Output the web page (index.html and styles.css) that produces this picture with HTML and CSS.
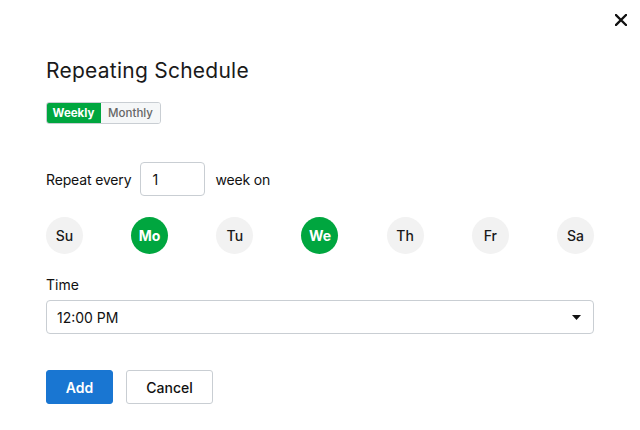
FILE: index.html
```html
<!DOCTYPE html>
<html>
<head>
<meta charset="utf-8">
<link rel="stylesheet" href="styles.css">
</head>
<body>
<div class="dialog">
  <button class="close" aria-label="Close">
    <svg width="12" height="12" viewBox="0 0 12 12"><path d="M1 1L11 11M11 1L1 11" stroke="#111" stroke-width="2.3" stroke-linecap="square"/></svg>
  </button>
  <h1 class="title">Repeating Schedule</h1>
  <div class="toggle">
    <span class="seg seg-on">Weekly</span>
    <span class="seg seg-off">Monthly</span>
  </div>
  <div class="repeat">
    <span>Repeat every</span>
    <div class="num">1</div>
    <span>week on</span>
  </div>
  <div class="days">
    <span class="day">Su</span>
    <span class="day on">Mo</span>
    <span class="day">Tu</span>
    <span class="day on">We</span>
    <span class="day">Th</span>
    <span class="day">Fr</span>
    <span class="day">Sa</span>
  </div>
  <div class="label">Time</div>
  <div class="select">
    <span>12:00 PM</span>
    <svg width="9" height="5" viewBox="0 0 9 5"><path d="M0 0H9L4.5 5Z" fill="#111"/></svg>
  </div>
  <div class="actions">
    <button class="btn primary">Add</button>
    <button class="btn secondary">Cancel</button>
  </div>
</div>
</body>
</html>
```
FILE: styles.css
```css
* { box-sizing: border-box; }
html, body { margin: 0; padding: 0; background: #fff; }
body { font-family: Inter, "Noto Sans", sans-serif; color: #111; }
.dialog {
  position: relative;
  width: 640px;
  height: 430px;
  padding: 58px 46px 0 46px;
}
.close {
  position: absolute;
  top: 13px;
  left: 614px;
  width: 14px;
  height: 14px;
  padding: 1px;
  border: 0;
  background: none;
  display: flex;
}
.title {
  margin: 0;
  font-size: 21px;
  line-height: 26px;
  font-weight: 400;
  color: #1a1a1a;
  letter-spacing: 0.25px;
}
.toggle {
  margin-top: 18px;
  display: inline-flex;
  height: 22px;
  border: 1px solid #c9ced3;
  border-radius: 3px;
  overflow: hidden;
  font-size: 11.5px;
  line-height: 20px;
}
.seg { display: flex; align-items: center; justify-content: center; }
.seg-on {
  width: 55px;
  background: #00a63f;
  color: #fff;
  font-weight: 700;
  margin: -1px 0 -1px -1px;
  border-radius: 3px 0 0 3px;
}
.seg-off {
  width: 59px;
  background: #f5f7f8;
  color: #666;
  font-weight: 500;
}
.repeat {
  margin-top: 38px;
  display: flex;
  align-items: center;
  font-size: 14px;
  height: 34px;
  letter-spacing: -0.15px;
}
.num {
  width: 65px;
  height: 34px;
  margin: 0 10px 0 9px;
  border: 1px solid #c9ced3;
  border-radius: 4px;
  padding: 0 11px;
  display: flex;
  align-items: center;
}
.days {
  margin-top: 21px;
  display: flex;
  justify-content: space-between;
  width: 548px;
}
.day {
  width: 37px;
  height: 37px;
  border-radius: 50%;
  background: #f2f2f2;
  display: flex;
  align-items: center;
  justify-content: center;
  font-size: 14px;
  font-weight: 500;
  color: #1a1a1a;
}
.day.on {
  background: #00a63f;
  color: #fff;
  font-weight: 700;
}
.label {
  margin-top: 21px;
  font-size: 14px;
  line-height: 20px;
}
.select {
  margin-top: 5px;
  width: 548px;
  height: 34px;
  border: 1px solid #c9ced3;
  border-radius: 4px;
  padding: 0 12px 0 10px;
  display: flex;
  align-items: center;
  justify-content: space-between;
  font-size: 14px;
}
.actions {
  margin-top: 36px;
  display: flex;
  gap: 13px;
}
.btn {
  height: 34px;
  border-radius: 3px;
  font-family: Inter, "Noto Sans", sans-serif;
  font-size: 14px;
  font-weight: 600;
  padding: 0;
}
.primary {
  width: 67px;
  background: #1976d2;
  border: 1px solid #1976d2;
  color: #fff;
}
.secondary {
  width: 87px;
  background: #fff;
  border: 1px solid #c9ced3;
  color: #111;
  font-weight: 500;
}
```
